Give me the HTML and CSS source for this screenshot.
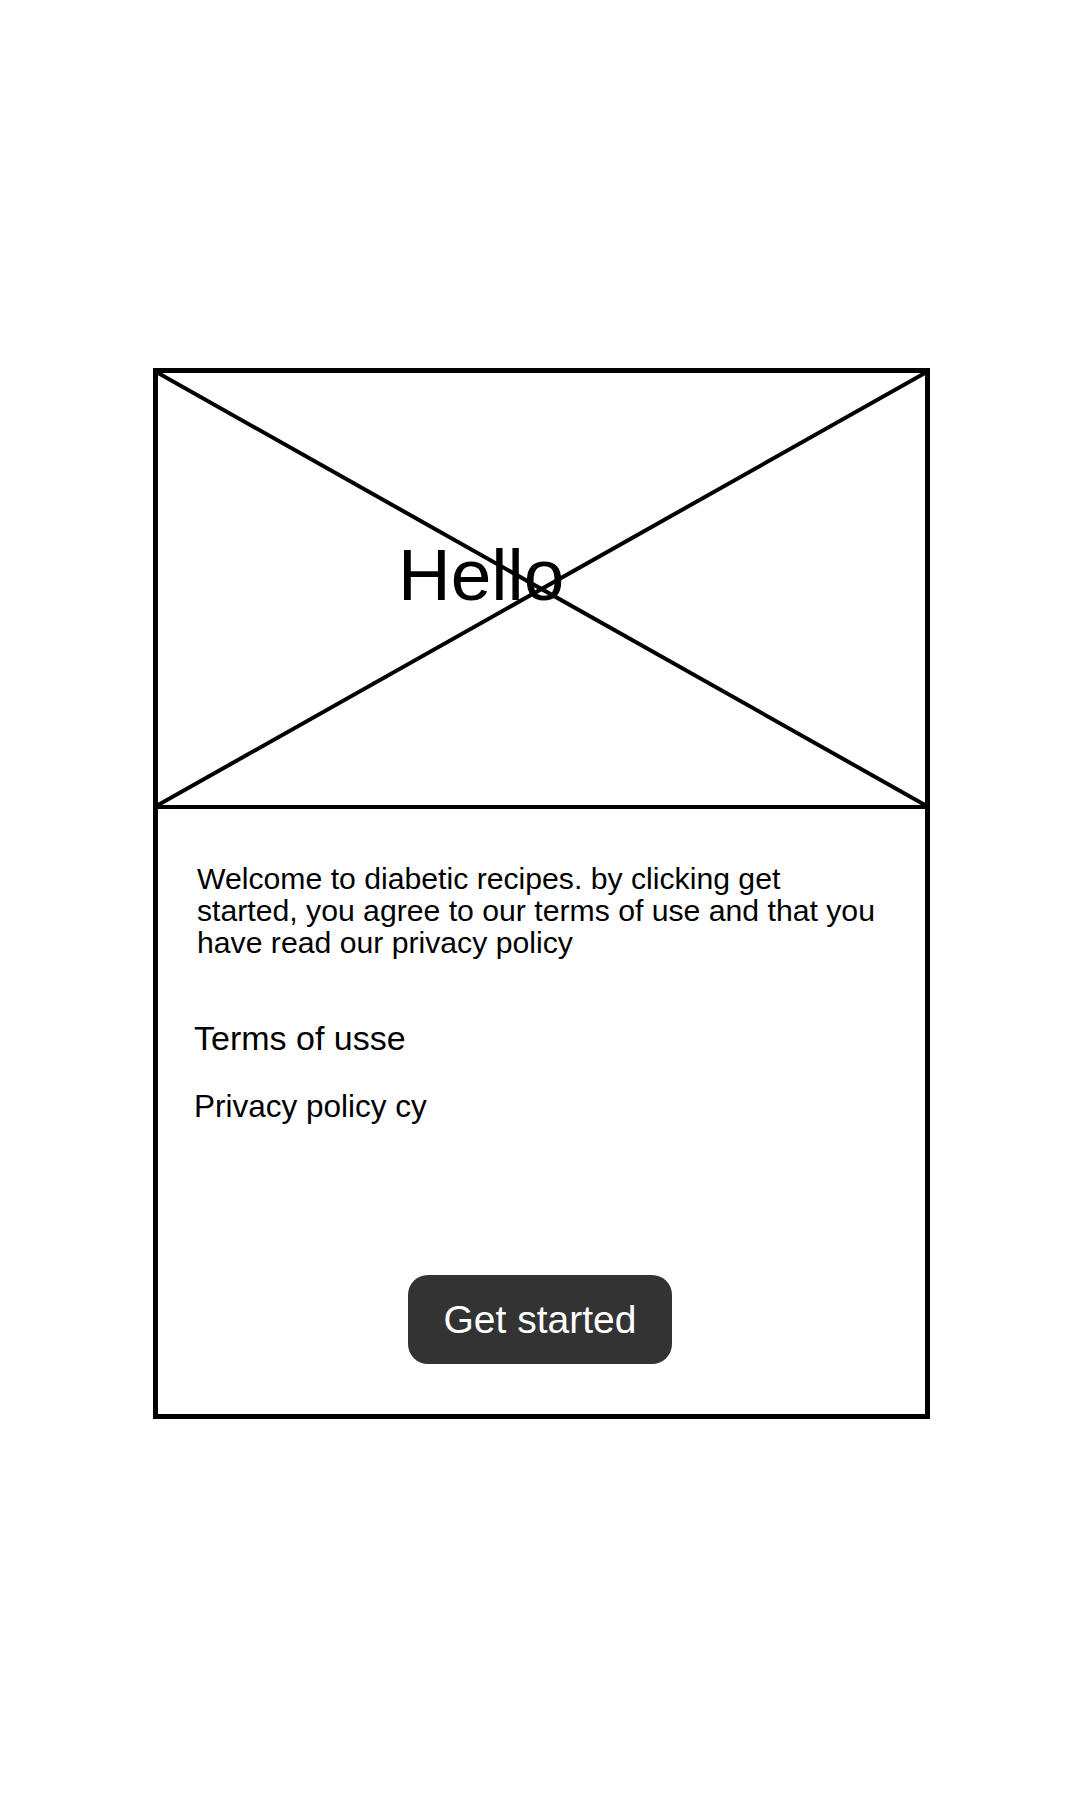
FILE: index.html
```html
<!DOCTYPE html>
<html lang="en">
<head>
<meta charset="utf-8">
<title>Diabetic recipes</title>
<link rel="stylesheet" href="styles.css">
</head>
<body>
<main class="card">
  <div class="hero">
    <svg class="hero-x" viewBox="0 0 767 432" preserveAspectRatio="none" aria-hidden="true">
      <line x1="0" y1="0" x2="767" y2="432"/>
      <line x1="767" y1="0" x2="0" y2="432"/>
    </svg>
    <h1 class="hero-title">Hello</h1>
  </div>
  <section class="content">
    <p class="intro">Welcome to diabetic recipes. by clicking get started, you agree to our terms of use and that you have read our privacy policy</p>
    <a class="link-terms">Terms of usse</a>
    <a class="link-privacy">Privacy policy cy</a>
    <button class="cta">Get started</button>
  </section>
</main>
</body>
</html>
```

FILE: styles.css
```css
html, body {
  margin: 0;
  padding: 0;
  background: #fff;
}

body {
  font-family: "Liberation Sans", Arial, sans-serif;
  color: #000;
}

.card {
  box-sizing: border-box;
  width: 777px;
  height: 1051px;
  margin: 368px 0 0 153px;
  border: 5px solid #000;
  display: flex;
  flex-direction: column;
}

.hero {
  position: relative;
  box-sizing: border-box;
  height: 436px;
  border-bottom: 4px solid #000;
  flex: none;
}

.hero-x {
  position: absolute;
  left: 0;
  top: 0;
  width: 100%;
  height: 100%;
  display: block;
}

.hero-x line {
  stroke: #000;
  stroke-width: 4;
  vector-effect: non-scaling-stroke;
}

.hero-title {
  position: absolute;
  left: 240px;
  top: 165px;
  margin: 0;
  font-size: 73px;
  font-weight: normal;
  line-height: 73px;
}

.content {
  display: flex;
  flex-direction: column;
  align-items: flex-start;
  padding: 54px 39px 0 36px;
}

.intro {
  margin: 0 0 0 3px;
  max-width: 684px;
  font-size: 30.2px;
  line-height: 32px;
}

.link-terms {
  margin-top: 60px;
  font-size: 34px;
  line-height: 38px;
}

.link-privacy {
  margin-top: 31px;
  font-size: 31.5px;
  line-height: 36px;
}

.cta {
  align-self: center;
  margin-top: 151px;
  width: 264px;
  height: 89px;
  border: none;
  border-radius: 20px;
  background: #333;
  color: #fff;
  font-family: "Liberation Sans", Arial, sans-serif;
  font-size: 39px;
  line-height: 46px;
  padding: 0;
  display: flex;
  align-items: center;
  justify-content: center;
}
```
